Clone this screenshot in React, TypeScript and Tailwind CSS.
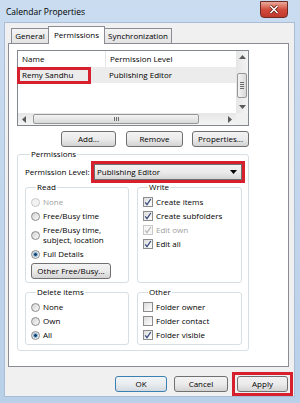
import React from 'react';

type ItemProps = { label: React.ReactNode; checked?: boolean; disabled?: boolean };

const Radio = ({ label, checked, disabled }: ItemProps) => (
  <div className={`flex items-center gap-[3px] leading-[10px] ${disabled ? 'text-[#a0a0a0]' : 'text-black'}`}>
    <span
      className={`flex h-[9px] w-[9px] shrink-0 items-center justify-center rounded-full border ${
        disabled ? 'border-[#c8c8c8] bg-[#f3f3f3]' : 'border-[#8c8c8c] bg-linear-to-br from-[#d2d2d2] to-[#fbfbfb]'
      }`}
    >
      {checked && <span className="h-[5px] w-[5px] rounded-full border border-[#8fbbe0] bg-[#123f6e]" />}
    </span>
    <span>{label}</span>
  </div>
);

const Check = ({ label, checked, disabled }: ItemProps) => (
  <div className={`flex items-center gap-[3px] leading-[10px] ${disabled ? 'text-[#a0a0a0]' : 'text-black'}`}>
    <span
      className={`flex h-[10px] w-[10px] shrink-0 items-center justify-center border ${
        disabled ? 'border-[#c8c8c8] bg-[#f6f6f6]' : 'border-[#8c8c8c] bg-linear-to-br from-[#dcdcdc] to-white'
      }`}
    >
      {checked && (
        <svg width="8" height="8" viewBox="0 0 8 8">
          <path d="M1.2 4.3 L3 6.6 L6.8 1" fill="none" stroke={disabled ? '#b9b9b9' : '#3b4f7c'} strokeWidth="1.3" />
        </svg>
      )}
    </span>
    <span>{label}</span>
  </div>
);

const Btn = ({ children, className = '', def }: { children: React.ReactNode; className?: string; def?: boolean }) => (
  <button
    type="button"
    className={`flex h-[16px] items-center justify-center rounded-[3px] border leading-[10px] ${
      def ? 'border-[#3c7fb1] bg-linear-to-b from-[#f2f5f7] via-[#e9edf0] to-[#d2d9de]' : 'border-[#707070] bg-linear-to-b from-[#f3f3f3] via-[#ebebeb] to-[#d3d3d3]'
    } ${className}`}
  >
    {children}
  </button>
);

const Group = ({ title, className = '', children }: { title: string; className?: string; children: React.ReactNode }) => (
  <fieldset className={`rounded-[3px] border border-[#d5dfe5] ${className}`}>
    <legend className="ml-[5px] px-[1px] leading-[10px]">{title}</legend>
    {children}
  </fieldset>
);

const Arrow = ({ dir }: { dir: 'up' | 'down' | 'left' | 'right' }) => {
  const pts = {
    up: '0,4 3.5,0 7,4',
    down: '0,0 3.5,4 7,0',
    left: '4,0 0,3.5 4,7',
    right: '0,0 4,3.5 0,7',
  }[dir];
  const vertical = dir === 'up' || dir === 'down';
  return (
    <svg width={vertical ? 7 : 4} height={vertical ? 4 : 7} viewBox={vertical ? '0 0 7 4' : '0 0 4 7'}>
      <polygon points={pts} fill="#5a5a5a" />
    </svg>
  );
};

export default function App() {
  return (
    <div className="flex h-[403px] w-[300px] flex-col bg-linear-to-b from-[#cadcf0] to-[#b9d0e9] font-['Open_Sans',sans-serif] text-[8px] text-black">
      {/* title bar */}
      <div className="flex h-[22px] justify-between">
        <div className="pl-[6px] pt-[7px] text-[8.5px] leading-[10px]">Calendar Properties</div>
        <div className="mr-[12px] mt-[1px] flex h-[17px] w-[28px] items-center justify-center rounded-b-[4px] border border-[#6e2a24] bg-linear-to-b from-[#e8a89c] via-[#d24c3e] to-[#c0372b]">
          <svg width="10" height="9" viewBox="0 0 10 9">
            <path d="M1.5 1 L8.5 8 M8.5 1 L1.5 8" stroke="#5a1810" strokeWidth="3" />
            <path d="M1.5 1 L8.5 8 M8.5 1 L1.5 8" stroke="#ffffff" strokeWidth="1.6" />
          </svg>
        </div>
      </div>

      {/* client area */}
      <div className="ml-[4px] flex h-[375px] w-[291px] flex-col border border-[#a9bed6] bg-[#f0f0f0]">
        {/* tabs */}
        <div className="flex h-[20px] items-end pl-[6px] pt-[3px]">
          <div className="flex h-[15px] w-[38px] items-center justify-center border border-b-0 border-[#898c95] bg-linear-to-b from-[#f3f3f3] to-[#e3e3e3] leading-[10px]">
            General
          </div>
          <div className="relative z-10 -mx-[1px] -mb-[1px] flex h-[18px] w-[57px] items-start justify-center border border-b-0 border-[#898c95] bg-white pt-[3px] leading-[10px]">
            Permissions
          </div>
          <div className="flex h-[15px] w-[68px] items-center justify-center border border-b-0 border-[#898c95] bg-linear-to-b from-[#f3f3f3] to-[#e3e3e3] leading-[10px]">
            Synchronization
          </div>
        </div>

        {/* tab page */}
        <div className="ml-[3px] h-[325px] w-[281px] border border-[#898c95] bg-white pl-[8px] pt-[6px]">
          {/* permissions list */}
          <div className="relative flex h-[76px] w-[232px] flex-col border border-[#828790] bg-white">
            <div className="flex flex-1">
              <div className="flex flex-1 flex-col">
                <div className="flex h-[16px] items-center leading-[10px]">
                  <div className="w-[87px] pl-[4px]">Name</div>
                  <div className="h-full w-px bg-[#e5e5e5]" />
                  <div className="pl-[4px]">Permission Level</div>
                </div>
                <div className="flex h-[16px] items-center bg-[#ececec] leading-[10px]">
                  <div className="w-[88px] pl-[4px]">Remy Sandhu</div>
                  <div className="pl-[3px]">Publishing Editor</div>
                </div>
              </div>
              {/* vertical scrollbar */}
              <div className="flex w-[12px] flex-col items-center bg-linear-to-r from-[#e6e6e6] to-[#f4f4f4]">
                <div className="flex h-[12px] items-center justify-center">
                  <Arrow dir="up" />
                </div>
                <div className="mt-[10px] flex h-[25px] w-[10px] flex-col items-center justify-center gap-[1px] rounded-[2px] border border-[#979797] bg-linear-to-r from-[#f4f4f4] to-[#d9d9d9]">
                  <div className="h-px w-[4px] bg-[#6b6b6b]" />
                  <div className="h-px w-[4px] bg-[#6b6b6b]" />
                  <div className="h-px w-[4px] bg-[#6b6b6b]" />
                  <div className="h-px w-[4px] bg-[#6b6b6b]" />
                </div>
                <div className="mt-auto flex h-[12px] items-center justify-center">
                  <Arrow dir="down" />
                </div>
              </div>
            </div>
            {/* horizontal scrollbar */}
            <div className="flex h-[12px]">
              <div className="flex flex-1 items-center bg-linear-to-b from-[#e6e6e6] to-[#f4f4f4]">
                <div className="flex w-[12px] justify-center">
                  <Arrow dir="left" />
                </div>
                <div className="ml-[3px] flex h-[10px] w-[166px] items-center justify-center gap-[1px] rounded-[2px] border border-[#979797] bg-linear-to-b from-[#f4f4f4] to-[#d9d9d9]">
                  <div className="h-[4px] w-px bg-[#6b6b6b]" />
                  <div className="h-[4px] w-px bg-[#6b6b6b]" />
                  <div className="h-[4px] w-px bg-[#6b6b6b]" />
                </div>
                <div className="ml-auto flex w-[12px] justify-center">
                  <Arrow dir="right" />
                </div>
              </div>
              <div className="w-[12px] bg-[#f0f0f0]" />
            </div>
            {/* annotation */}
            <div className="absolute -left-[1px] top-[16px] h-[17px] w-[74px] border-[3px] border-[#d6202e]" />
          </div>

          {/* list buttons */}
          <div className="mt-[5px] flex w-[232px] justify-end gap-[9px]">
            <Btn className="mr-[1px] w-[55px]">Add...</Btn>
            <Btn className="w-[57px]">Remove</Btn>
            <Btn className="w-[57px]">Properties...</Btn>
          </div>

          {/* permissions group */}
          <Group title="Permissions" className="mt-[2px] w-[232px] pb-[5px] pl-[7px]">
            <div className="mt-[2px] flex items-center">
              <div className="w-[66px] leading-[10px]">Permission Level:</div>
              <div className="h-[22px] w-[154px] border-[3px] border-[#d6202e]">
                <div className="flex h-[16px] items-center justify-between border border-[#707070] bg-linear-to-b from-[#f3f3f3] via-[#ebebeb] to-[#d6d6d6] pl-[2px] pr-[4px] leading-[10px]">
                  <span>Publishing Editor</span>
                  <svg width="7" height="4" viewBox="0 0 7 4">
                    <polygon points="0,0 7,0 3.5,4" fill="#000" />
                  </svg>
                </div>
              </div>
            </div>

            <div className="-mt-[1px] flex gap-[8px]">
              <Group title="Read" className="w-[104px] pb-[3px] pl-[5px]">
                <div className="flex flex-col gap-[4px] pt-[5px]">
                  <Radio label="None" disabled />
                  <Radio label="Free/Busy time" />
                  <Radio
                    label={
                      <>
                        Free/Busy time,
                        <br />
                        subject, location
                      </>
                    }
                  />
                  <Radio label="Full Details" checked />
                  <Btn className="w-[80px]">Other Free/Busy...</Btn>
                </div>
              </Group>
              <Group title="Write" className="w-[105px] pl-[5px]">
                <div className="flex flex-col gap-[4px] pt-[5px]">
                  <Check label="Create items" checked />
                  <Check label="Create subfolders" checked />
                  <Check label="Edit own" checked disabled />
                  <Check label="Edit all" checked />
                </div>
              </Group>
            </div>

            <div className="mt-[4px] flex gap-[8px]">
              <Group title="Delete items" className="w-[104px] pb-[4px] pl-[5px]">
                <div className="flex flex-col gap-[4px] pt-[5px]">
                  <Radio label="None" />
                  <Radio label="Own" />
                  <Radio label="All" checked />
                </div>
              </Group>
              <Group title="Other" className="w-[105px] pb-[4px] pl-[5px]">
                <div className="flex flex-col gap-[4px] pt-[5px]">
                  <Check label="Folder owner" />
                  <Check label="Folder contact" />
                  <Check label="Folder visible" checked />
                </div>
              </Group>
            </div>
          </Group>
        </div>

        {/* dialog buttons */}
        <div className="mt-[5px] flex items-center justify-end pr-[1px]">
          <Btn def className="mr-[7px] w-[52px]">OK</Btn>
          <Btn className="mr-[4px] w-[54px]">Cancel</Btn>
          <div className="border-[3px] border-[#d6202e] px-[2px] py-[1px]">
            <Btn className="w-[51px]">Apply</Btn>
          </div>
        </div>
      </div>
    </div>
  );
}
